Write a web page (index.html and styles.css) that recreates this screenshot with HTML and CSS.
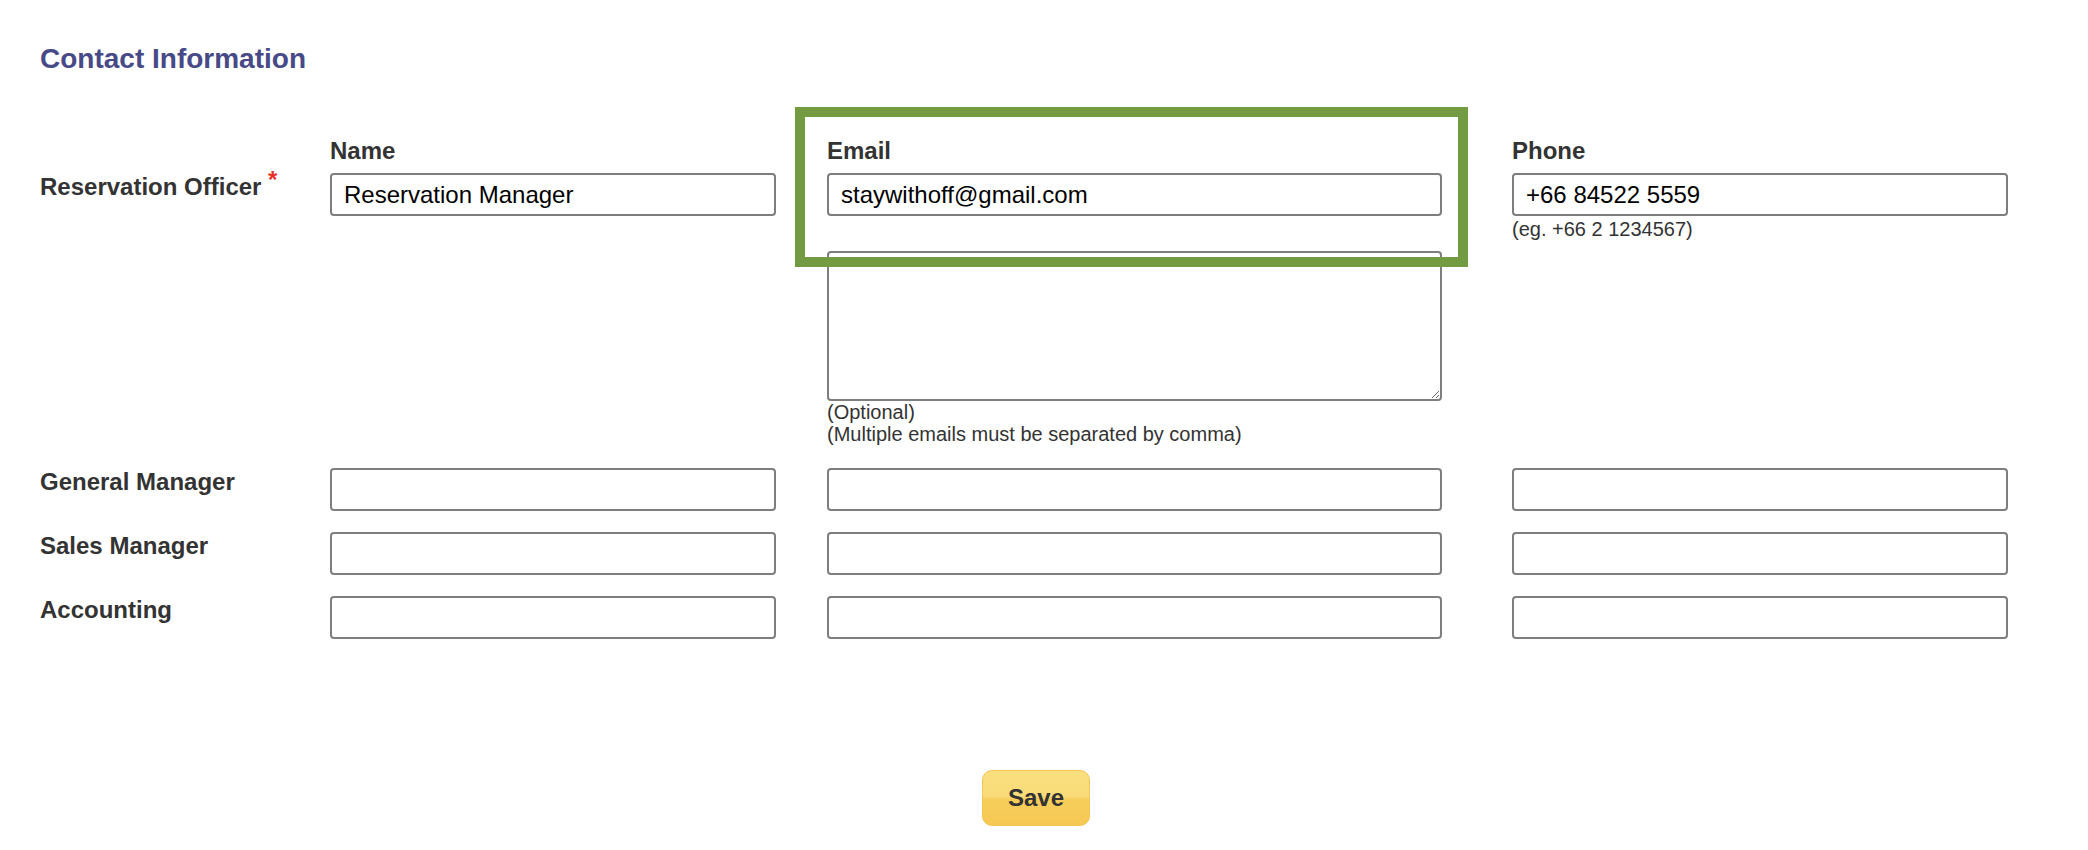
FILE: index.html
```html
<!DOCTYPE html>
<html lang="en">
<head>
<meta charset="utf-8">
<title>Contact Information</title>
<link rel="stylesheet" href="styles.css">
</head>
<body>
<div class="page">
  <h2 class="title">Contact Information</h2>
  <div class="contact-grid">
    <div class="col-head"></div>
    <div class="col-head">Name</div>
    <div class="col-head email-head">Email<div class="highlight"></div></div>
    <div class="col-head">Phone</div>

    <div class="row-label">Reservation Officer <span class="req">*</span></div>
    <div class="cell"><input class="field name-field" type="text" value="Reservation Manager"></div>
    <div class="cell email-cell">
      <input class="field email-field" type="text" value="staywithoff@gmail.com">
      <textarea class="field-area"></textarea>
      <div class="hint">(Optional)<br>(Multiple emails must be separated by comma)</div>
    </div>
    <div class="cell">
      <input class="field phone-field" type="text" value="+66 84522 5559">
      <div class="hint phone-hint">(eg. +66 2 1234567)</div>
    </div>

    <div class="row-label">General Manager</div>
    <div class="cell"><input class="field name-field" type="text"></div>
    <div class="cell"><input class="field email-field" type="text"></div>
    <div class="cell"><input class="field phone-field" type="text"></div>

    <div class="row-label">Sales Manager</div>
    <div class="cell"><input class="field name-field" type="text"></div>
    <div class="cell"><input class="field email-field" type="text"></div>
    <div class="cell"><input class="field phone-field" type="text"></div>

    <div class="row-label">Accounting</div>
    <div class="cell"><input class="field name-field" type="text"></div>
    <div class="cell"><input class="field email-field" type="text"></div>
    <div class="cell"><input class="field phone-field" type="text"></div>
  </div>
  <div class="actions"><button class="save-btn" type="button">Save</button></div>
</div>
</body>
</html>
```

FILE: styles.css
```css
html, body {
  margin: 0;
  padding: 0;
  background: #ffffff;
}

body {
  font-family: "Liberation Sans", Arial, Helvetica, sans-serif;
  color: #333333;
}

.page {
  padding: 0 56px 0 40px;
}

.title {
  margin: 43px 0 62px;
  font-size: 28px;
  line-height: 32px;
  font-weight: bold;
  color: #474a86;
}

.contact-grid {
  display: grid;
  grid-template-columns: 290px 497px 685px 496px;
  align-items: start;
}

.col-head {
  font-size: 24px;
  line-height: 28px;
  font-weight: bold;
  color: #333333;
  padding-bottom: 8px;
}

.email-head {
  position: relative;
}

.highlight {
  position: absolute;
  left: -32px;
  top: -30px;
  width: 673px;
  height: 160px;
  box-sizing: border-box;
  border: 10px solid #739b41;
  pointer-events: none;
}

.row-label {
  font-size: 24px;
  font-weight: bold;
  color: #333333;
  padding-bottom: 21px;
}

.req {
  color: #e8302a;
  font-size: 24px;
  line-height: 0;
  vertical-align: 7px;
}

.cell {
  padding-bottom: 21px;
}

.field {
  display: block;
  box-sizing: border-box;
  height: 43px;
  margin: 0;
  padding: 0 12px;
  border: 2px solid #7e7e7e;
  border-radius: 4px;
  background: #ffffff;
  font-family: "Liberation Sans", Arial, Helvetica, sans-serif;
  font-size: 24px;
  color: #000000;
  outline: none;
}

.name-field {
  width: 446px;
}

.email-field {
  width: 615px;
}

.phone-field {
  width: 496px;
}

.field-area {
  display: block;
  box-sizing: border-box;
  width: 615px;
  height: 150px;
  margin: 35px 0 0;
  padding: 6px 12px;
  border: 2px solid #7e7e7e;
  border-radius: 4px;
  background: #ffffff;
  font-family: "Liberation Sans", Arial, Helvetica, sans-serif;
  font-size: 24px;
  outline: none;
}

.hint {
  font-size: 20px;
  line-height: 22px;
  color: #333333;
}

.email-cell .hint {
  margin-bottom: 2px;
}

.phone-hint {
  margin-top: 2px;
}

.actions {
  margin-top: 110px;
  text-align: center;
}

.save-btn {
  box-sizing: border-box;
  width: 108px;
  height: 56px;
  padding: 0;
  border: 1px solid #f2c451;
  border-radius: 10px;
  background: linear-gradient(#fadf7f 0%, #f9dc78 47%, #f7cd5b 53%, #f6c953 100%);
  font-family: "Liberation Sans", Arial, Helvetica, sans-serif;
  font-size: 24px;
  font-weight: bold;
  color: #333333;
  cursor: pointer;
}
```
